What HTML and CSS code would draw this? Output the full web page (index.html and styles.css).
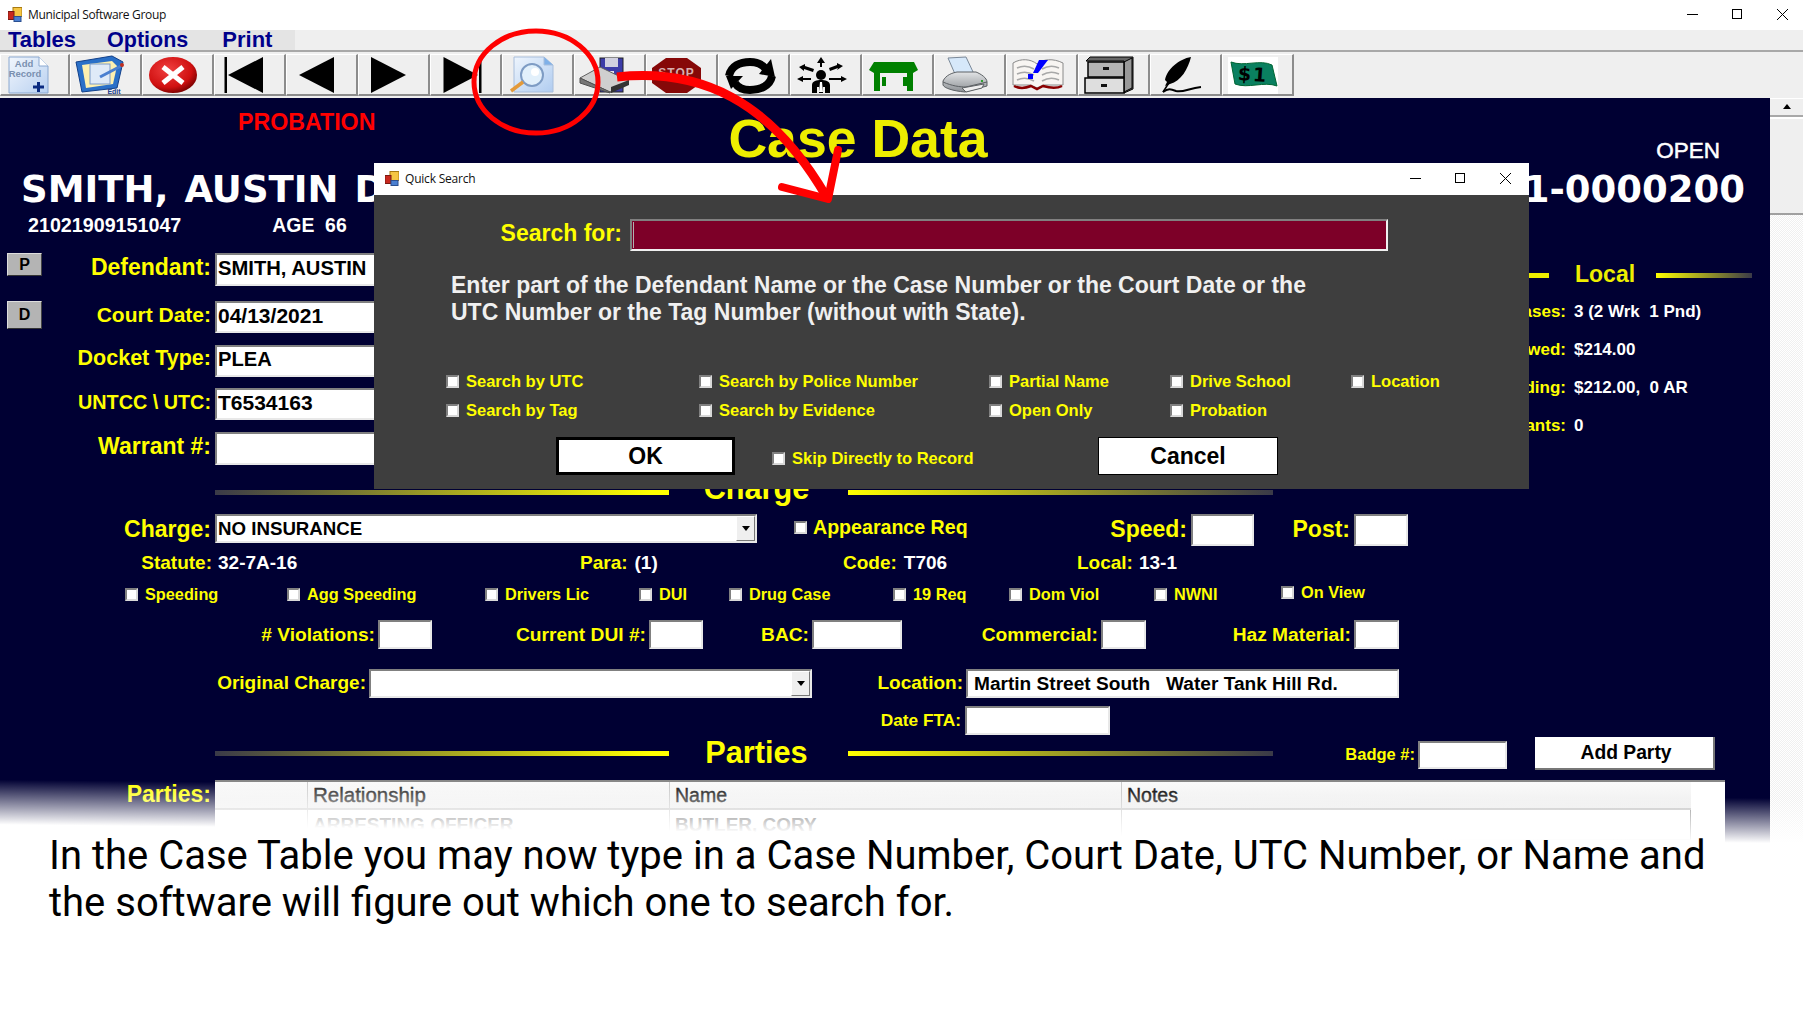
FILE: index.html
```html
<!DOCTYPE html>
<html lang="en">
<head>
<meta charset="utf-8">
<title>Municipal Software Group</title>
<link rel="stylesheet" href="styles.css">
</head>
<body>
<div class="page">
  <header class="titlebar">
    <svg class="appicon" viewBox="0 0 14 14"><rect x="5" y="0" width="9" height="9" fill="#f5c542" stroke="#a87a10"/><rect x="0" y="4" width="6" height="8" fill="#c8281e" stroke="#7a1a12"/><rect x="6" y="9" width="7" height="5" fill="#4a7fd0" stroke="#2a4f90"/></svg>
    <span class="titletext maintitle">Municipal Software Group</span>
    <span class="winctl">
      <i class="w-min"></i><i class="w-max"></i>
      <svg class="w-close" viewBox="0 0 11 11"><path d="M0 0L11 11M11 0L0 11" stroke="#000" fill="none"/></svg>
    </span>
  </header>
  <nav class="menubar"><div class="menus"><span class="m1">Tables</span><span class="m2">Options</span><span class="m3">Print</span></div></nav>
  <div class="toolbar">
    <button class="tb first"><svg viewBox="0 0 60 40"><defs><linearGradient id="pg" x1="0" y1="0" x2="1" y2="1"><stop offset="0" stop-color="#f2f7fd"/><stop offset="1" stop-color="#b8d0f0"/></linearGradient></defs><path d="M5 2H35L44 11V38H5Z" fill="url(#pg)" stroke="#8aa8d0"/><path d="M35 2V11H44" fill="#fff" stroke="#8aa8d0"/><text x="20" y="12" class="ic-t">Add</text><text x="21" y="22" class="ic-t">Record</text><path d="M29 32H40M34.500 27V37" stroke="#0a2a80" stroke-width="3"/></svg></button>
    <button class="tb"><svg viewBox="0 0 60 40"><path d="M0 7L36 1L47 7L41 33L6 37Z" fill="#2a70c8" stroke="#12408a"/><path d="M6 10L36 6L41 11L37 29L10 33Z" fill="#fdf0b0"/><rect x="14" y="9" width="20" height="20" fill="#dfeaf8" stroke="#7a9ac8"/><path d="M24 22L45 11" stroke="#4a7fd0" stroke-width="3"/><circle cx="46" cy="10" r="2" fill="#c03020"/><text x="38" y="39" class="ic-e">Edit</text></svg></button>
    <button class="tb"><svg viewBox="0 0 60 40"><defs><radialGradient id="rg" cx=".4" cy=".35" r=".7"><stop offset="0" stop-color="#f04040"/><stop offset=".7" stop-color="#d01010"/><stop offset="1" stop-color="#700000"/></radialGradient></defs><ellipse cx="25" cy="20" rx="24" ry="18" fill="url(#rg)"/><path d="M15 12L35 28M35 12L15 28" stroke="#fff" stroke-width="5"/></svg></button>
    <button class="tb"><svg viewBox="0 0 60 40"><rect x="4.500" y="2" width="2.500" height="36"/><path d="M8 20L43 2V38Z"/></svg></button>
    <button class="tb"><svg viewBox="0 0 60 40"><path d="M7 20L42 2V38Z"/></svg></button>
    <button class="tb"><svg viewBox="0 0 60 40"><path d="M7 2L42 20L7 38Z"/></svg></button>
    <button class="tb"><svg viewBox="0 0 60 40"><path d="M7.500 2L42 20L7.500 38Z"/><rect x="43" y="2" width="2.500" height="36"/></svg></button>
    <button class="tb"><svg viewBox="0 0 60 40"><defs><linearGradient id="sg" x1="0" y1="0" x2="1" y2="1"><stop offset="0" stop-color="#eef5fd"/><stop offset="1" stop-color="#b0ccf0"/></linearGradient></defs><path d="M6 2H36L45 10V37H6Z" fill="url(#sg)" stroke="#a8bedc"/><path d="M36 2V10H45" fill="#7fb0e8" stroke="#a8bedc"/><circle cx="24" cy="20" r="11" fill="#e2f0fb" stroke="#7e9cc4" stroke-width="2"/><circle cx="27" cy="17" r="4" fill="#fff"/><path d="M15 27L3 36" stroke="#e39a3a" stroke-width="3.500"/></svg></button>
    <button class="tb"><svg viewBox="0 0 60 40"><rect x="20" y="3" width="23" height="34" fill="#3c3ca8" stroke="#222"/><rect x="25" y="3" width="13" height="9" fill="#d0d0e0"/><rect x="27" y="16" width="7" height="10" fill="#e0e0f0"/><path d="M0 23L20 12L49 26L30 37Z" fill="#cfcfcf" stroke="#606060"/><path d="M0 23V28L30 38V37Z" fill="#777" stroke="#505050"/><path d="M31 32L49 25V30L31 38Z" fill="#333"/></svg></button>
    <button class="tb"><svg viewBox="0 0 60 40"><path d="M14 3H35L49 13V28L35 38H14L0 28V13Z" fill="#860808"/><text x="24.500" y="22" class="ic-stop">STOP</text></svg></button>
    <button class="tb"><svg viewBox="0 0 60 40"><path d="M5 21C7 11 16 7 26 7C33 7 38 9 42 14" fill="none" stroke="#000" stroke-width="8"/><path d="M35 19L47 4L51 22Z"/><path d="M48 21C46 31 36 35 26 35C20 35 14 33 11 28" fill="none" stroke="#000" stroke-width="8"/><path d="M2 21H19L7 34Z"/></svg></button>
    <button class="tb"><svg viewBox="0 0 60 40"><circle cx="25" cy="20" r="5"/><path d="M16 38V30C16 26 21 25 25 25C29 25 34 26 34 30V38H29V32H27V38H23V32H21V38Z"/><path d="M24 27H26L27 37H23Z" fill="#fff"/><path d="M25 2L21 8H24V12H26V8H29Z"/><path d="M3 12L9 9V11L18 14L17 17L8 14V16Z"/><path d="M47 11L41 8V10L33 13L34 16L42 13L41 15Z"/><path d="M1 24L7 21V23H15V25H7V27Z"/><path d="M51 24L45 21V23H33V25H45V27Z"/></svg></button>
    <button class="tb"><svg viewBox="0 0 60 40"><path d="M6 7H46L50 15L45 18V36H39V18H12V36H6V18L1 15Z" fill="#008000"/><rect x="14" y="22" width="4" height="9" fill="#008000"/><rect x="35" y="22" width="4" height="9" fill="#008000"/></svg></button>
    <button class="tb"><svg viewBox="0 0 60 40"><defs><linearGradient id="prg" x1="0" y1="0" x2="0" y2="1"><stop offset="0" stop-color="#e2e4e6"/><stop offset="1" stop-color="#8c9094"/></linearGradient></defs><path d="M8 3L26 2L34 19H15Z" fill="#d6e8fa" stroke="#7a8898"/><path d="M3 26C6 20 12 18 17 17H36C41 19 47 23 47 27V31L25 37C13 36 4 33 3 30Z" fill="url(#prg)" stroke="#5c6064"/><path d="M3 27C12 31 20 32 26 32L47 27" fill="none" stroke="#5c6064"/><path d="M22 33L44 29L42 33L26 37Z" fill="#eee" stroke="#5c6064"/><rect x="41" y="25" width="2" height="2" fill="#30a030"/></svg></button>
    <button class="tb"><svg viewBox="0 0 60 40"><path d="M1 8C9 3 19 4 25 9C31 4 41 3 51 8V30H31L25 33L19 30H1Z" fill="#f8f5f2" stroke="#8a8a8a"/><path d="M5 13C11 10 17 11 22 14M5 19C11 16 17 17 22 20M5 25C11 22 17 23 22 26M30 14C35 11 41 10 47 13M30 20C35 17 41 16 47 19M30 26C35 23 41 22 47 25" fill="none" stroke="#a8a8a8" stroke-width="1.500"/><path d="M2 31C8 34 14 33 19 31L25 34L31 31C38 33 44 34 50 31" fill="none" stroke="#8b0000" stroke-width="2.500"/><path d="M27 5H36L26 18H21Z" fill="#0000ff"/><rect x="16" y="19" width="5" height="5" fill="#0000ff"/></svg></button>
    <button class="tb"><svg viewBox="0 0 60 40"><path d="M2 6L6 2H49V34L40 38V6Z" fill="#666" stroke="#000"/><path d="M40 7L48 3V33L40 37Z" fill="#999" stroke="#000"/><rect x="4" y="7" width="36" height="15" fill="#b4b4b4" stroke="#000" stroke-width="1.500"/><rect x="19" y="12" width="6" height="3" fill="#111"/><rect x="1" y="23" width="39" height="15" fill="#dedede" stroke="#000" stroke-width="1.500"/><rect x="17" y="29" width="6" height="3" fill="#111"/></svg></button>
    <button class="tb"><svg viewBox="0 0 60 40"><path d="M35 2C23 4 11 14 9 25L11 27L9 31L14 29C25 26 32 14 35 2Z"/><path d="M7 37C12 33 15 34 20 36C27 38 33 33 45 32" fill="none" stroke="#000" stroke-width="2"/><path d="M7 37L18 20" stroke="#000" stroke-width="1.500"/></svg></button>
    <button class="tb"><svg viewBox="0 0 60 40"><rect x="0" y="2" width="50" height="37" fill="#fff"/><path d="M3 7C16 12 32 4 44 10L49 31C36 26 20 34 7 29Z" fill="#0a8060" stroke="#063"/><text x="25" y="26" class="ic-d" transform="rotate(4 25 20)">$1</text></svg></button>
  </div>

  <main class="main">
    <section class="form">
      <div class="head1"><span class="probation">PROBATION</span><span class="casedata">Case Data</span><span class="open">OPEN</span></div>
      <div class="head2"><span class="name">SMITH, AUSTIN D</span><span class="caseno">CR2021-0000200</span></div>
      <div class="head3"><span class="uid">21021909151047</span><span class="age">AGE&nbsp; 66</span></div>

      <div class="top">
        <div class="topleft">
          <div class="trow"><button class="pd">P</button><label class="l23">Defendant:</label><div class="fld big tall nar">SMITH, AUSTIN</div></div>
          <div class="trow"><button class="pd pd2">D</button><label class="l21">Court Date:</label><div class="fld big">04/13/2021</div></div>
          <div class="trow up1"><span class="nopd"></span><label class="l215">Docket Type:</label><div class="fld big nar">PLEA</div></div>
          <div class="trow"><span class="nopd"></span><label class="l198">UNTCC \ UTC:</label><div class="fld big">T6534163</div></div>
          <div class="trow"><span class="nopd"></span><label class="l23">Warrant #:</label><div class="fld big tall"></div></div>
        </div>
        <div class="local">
          <div class="localhead"><i class="rule solid"></i><span>Local</span><i class="rule fade-r"></i></div>
          <div class="stat"><span class="k">Cases:</span><span class="v">3 (2 Wrk&nbsp; 1 Pnd)</span></div>
          <div class="stat"><span class="k">Owed:</span><span class="v">$214.00</span></div>
          <div class="stat"><span class="k">Pending:</span><span class="v">$212.00,&nbsp; 0 AR</span></div>
          <div class="stat"><span class="k">Warrants:</span><span class="v">0</span></div>
        </div>
      </div>

      <div class="sect sect-charge"><i class="rule fade-l"></i><span class="secttitle">Charge</span><i class="rule fade-r"></i></div>

      <div class="row r-charge">
        <label class="l23">Charge:</label>
        <div class="fld sel"><span>NO INSURANCE</span><b class="drop"></b></div>
        <div class="chk c20 appear"><i class="cb"></i>Appearance Req</div>
        <label class="l23">Speed:</label><div class="fld h32"></div>
        <label class="l23">Post:</label><div class="fld h32"></div>
      </div>
      <div class="row r-stat">
        <span class="st-k">Statute:</span><span class="st-v">32-7A-16</span>
        <span class="st-p">Para:<em>(1)</em></span>
        <span class="st-p">Code:<em>T706</em></span>
        <span class="st-p">Local:<em class="tight">13-1</em></span>
      </div>
      <div class="row r-checks">
        <div class="chk"><i class="cb"></i>Speeding</div>
        <div class="chk"><i class="cb"></i>Agg Speeding</div>
        <div class="chk"><i class="cb"></i>Drivers Lic</div>
        <div class="chk"><i class="cb"></i>DUI</div>
        <div class="chk"><i class="cb"></i>Drug Case</div>
        <div class="chk"><i class="cb"></i>19 Req</div>
        <div class="chk"><i class="cb"></i>Dom Viol</div>
        <div class="chk"><i class="cb"></i>NWNI</div>
        <div class="chk up"><i class="cb"></i>On View</div>
      </div>
      <div class="row r-viol">
        <label>#&nbsp;Violations:</label><div class="fld"></div>
        <label>Current DUI #:</label><div class="fld"></div>
        <label>BAC:</label><div class="fld"></div>
        <label>Commercial:</label><div class="fld"></div>
        <label>Haz Material:</label><div class="fld"></div>
      </div>
      <div class="row r-orig">
        <label>Original Charge:</label>
        <div class="fld sel"><span></span><b class="drop"></b></div>
        <label>Location:</label>
        <div class="fld loc">Martin Street South&nbsp;&nbsp; Water Tank Hill Rd.</div>
      </div>
      <div class="row r-fta"><label>Date FTA:</label><div class="fld"></div></div>
      <div class="sect sect-parties">
        <i class="rule fade-l"></i><span class="secttitle">Parties</span><i class="rule fade-r"></i>
        <label>Badge #:</label><div class="fld badge"></div>
        <button class="addparty">Add Party</button>
      </div>
      <div class="partiesrow">
        <label class="l23 plabel">Parties:</label>
        <div class="grid">
          <div class="gh"><span class="c0"></span><span class="c1">Relationship</span><span class="c2">Name</span><span class="c3">Notes</span></div>
          <div class="gr"><span class="c0"></span><span class="c1">ARRESTING OFFICER</span><span class="c2">BUTLER, CORY</span><span class="c3"></span></div>
        </div>
      </div>
    </section>
    <aside class="scroll">
      <div class="sb-up"><i></i></div>
      <div class="sb-thumb"></div>
      <div class="sb-track"></div>
    </aside>
    <div class="fade"></div>
  </main>

  <p class="caption">In the Case Table you may now type in a Case Number, Court Date, UTC Number, or Name and<br>the software will figure out which one to search for.</p>

  <section class="dialog">
    <div class="dtitle">
      <svg class="appicon" viewBox="0 0 14 14"><rect x="5" y="0" width="9" height="9" fill="#f5c542" stroke="#a87a10"/><rect x="0" y="4" width="6" height="8" fill="#c8281e" stroke="#7a1a12"/><rect x="6" y="9" width="7" height="5" fill="#4a7fd0" stroke="#2a4f90"/></svg>
      <span class="titletext">Quick Search</span>
      <span class="winctl dctl">
        <i class="w-min"></i><i class="w-max"></i>
        <svg class="w-close" viewBox="0 0 11 11"><path d="M0 0L11 11M11 0L0 11" stroke="#000" fill="none"/></svg>
      </span>
    </div>
    <div class="dbody">
      <div class="dsearch"><label>Search for:</label><div class="dinput"><i class="caret"></i></div></div>
      <p class="dhelp">Enter part of the Defendant Name or the Case Number or the Court Date or the<br>UTC Number or the Tag Number (without with State).</p>
      <div class="dchecks">
        <div class="chk"><i class="cb"></i>Search by UTC</div>
        <div class="chk"><i class="cb"></i>Search by Police Number</div>
        <div class="chk"><i class="cb"></i>Partial Name</div>
        <div class="chk"><i class="cb"></i>Drive School</div>
        <div class="chk"><i class="cb"></i>Location</div>
        <div class="chk"><i class="cb"></i>Search by Tag</div>
        <div class="chk"><i class="cb"></i>Search by Evidence</div>
        <div class="chk"><i class="cb"></i>Open Only</div>
        <div class="chk"><i class="cb"></i>Probation</div>
      </div>
      <div class="dbtns">
        <button class="dbtn ok">OK</button>
        <div class="chk"><i class="cb"></i>Skip Directly to Record</div>
        <button class="dbtn cancel">Cancel</button>
      </div>
    </div>
  </section>

  <svg class="annot" viewBox="0 0 1803 1016">
    <ellipse cx="536" cy="82" rx="62" ry="51" fill="none" stroke="#f00" stroke-width="5"/>
    <path d="M617 77C700 68 770 100 826 196" fill="none" stroke="#f00" stroke-width="9"/>
    <path d="M782 187L828 199L838 150" fill="none" stroke="#f00" stroke-width="8" stroke-linecap="round" stroke-linejoin="round"/>
  </svg>
</div>
</body>
</html>
```
FILE: styles.css
```css
* { box-sizing: border-box; }
html, body { margin: 0; padding: 0; background: #fff; }
body { font-family: "Liberation Sans", Arial, sans-serif; }
.page { position: relative; width: 1803px; height: 1016px; overflow: hidden; background: #fff; }

/* window chrome */
.titlebar { height: 30px; display: flex; align-items: center; padding: 0 0 2px 8px; background: #fff; }
.appicon { width: 14px; height: 15px; margin-right: 6px; flex: none; }
.titletext { font-family: "Open Sans", sans-serif; font-size: 12px; letter-spacing: -.2px; color: #111; }
.maintitle { letter-spacing: -.33px; }
.winctl { margin-left: auto; display: flex; align-items: center; width: 116px; height: 28px; }
.w-min { display: block; width: 11px; height: 1px; background: #000; }
.w-max { display: block; width: 10px; height: 10px; border: 1px solid #000; margin-left: 34px; }
.w-close { width: 11px; height: 11px; margin-left: 35px; }

.menubar { height: 22px; background: #efefef; border-bottom: 2px solid #a8a8a8; }
.menus { width: 295px; height: 20px; background: #e4e4e4; display: flex; font-weight: 700; font-size: 22px; line-height: 20px; color: #00008b; }
.m1 { margin-left: 8px; }
.m2 { margin-left: 31px; font-size: 21.500px; }
.m3 { margin-left: 34px; }

.toolbar { height: 46px; background: #efefef; display: flex; padding: 2px 0; }
.tb { width: 72px; height: 42px; padding: 0 0 0 5px; background: #efefef; border: 0; border-left: 1px solid #fff; border-top: 1px solid #fff; border-right: 2px solid #8c8c8c; border-bottom: 2px solid #8c8c8c; display: block; }
.tb.first { width: 70px; padding-left: 3px; }
.tb svg { display: block; width: 60px; height: 40px; overflow: visible; }
.ic-t { font: 700 9.500px "Liberation Sans", sans-serif; fill: #7a90b0; text-anchor: middle; }
.ic-e { font: 700 7px "Liberation Sans", sans-serif; fill: #24408a; text-anchor: middle; }
.ic-stop { font: 700 12px "Liberation Sans", sans-serif; fill: #d8b0b0; text-anchor: middle; letter-spacing: 1px; }
.ic-d { font: 700 19px "DejaVu Sans", sans-serif; fill: #000; text-anchor: middle; letter-spacing: 2px; }

/* main form */
.main { position: relative; display: flex; height: 747px; }
.form { width: 1770px; background: #000033; color: #ff0; font-weight: 700; overflow: hidden; }
label { display: block; text-align: right; padding-right: 4px; color: #ff0; font-weight: 700; white-space: nowrap; }

.head1 { height: 70px; display: flex; }
.probation { margin: 11px 0 0 238px; font-size: 23.200px; line-height: 26px; color: #f00; }
.casedata { margin: 9px 0 0 353px; font-size: 53.600px; line-height: 62px; color: #eeee00; }
.open { margin: 40px 0 0 auto; padding-right: 50px; font-size: 22.500px; line-height: 26px; font-weight: 400; color: #fff; -webkit-text-stroke: .5px #fff; }
.head2 { height: 41px; display: flex; justify-content: space-between; padding: 1px 25px 0 21px; font-family: "DejaVu Sans", sans-serif; font-size: 37px; line-height: 41px; color: #fff; }
.name { word-spacing: 3px; }
.head3 { height: 34px; display: flex; padding-left: 28px; color: #fff; font-size: 19.700px; line-height: 32px; }
.age { margin-left: 91px; font-size: 19.400px; }

.top { display: flex; height: 222px; margin-top: 10px; }
.topleft { width: 1470px; display: grid; grid-template-rows: 48px 44px 43px 44px 33px; }
.trow { display: grid; grid-template-columns: 7px 35px 173px 420px; align-items: start; }
.trow label { grid-column: 3; grid-row: 1; line-height: 28px; }
.trow .fld { grid-column: 4; grid-row: 1; }
.trow .pd { grid-column: 2; grid-row: 1; }
.trow .nopd { display: none; }
.up1 label { line-height: 26px; }
.up1 .fld.big { line-height: 25px; }
.l23 { font-size: 23px; }
.l21 { font-size: 21px; }
.l215 { font-size: 21.500px; }
.l198 { font-size: 19.800px; }
.pd { height: 23px; width: 35px; padding: 0; background: #b4b4b4; border: 1px solid; border-color: #ddd #444 #333 #ddd; font: 700 16px "Liberation Sans", sans-serif; color: #000; }
.pd2 { height: 28px; }

.fld { height: 29px; background: #fff; border: 2px solid; border-color: #808080 #e8e8e8 #e8e8e8 #808080; color: #000; font-weight: 700; font-size: 19px; white-space: nowrap; overflow: hidden; }
.fld.big { height: 32px; padding-left: 1px; font-size: 21px; line-height: 26px; }
.fld.tall { height: 33px; }
.fld.nar { font-size: 20.200px; }
.h32 { height: 32px; }

.local { width: 300px; padding-top: 2px; font-size: 17px; }
.localhead { height: 38px; display: flex; align-items: center; font-size: 23px; color: #eeee00; }
.localhead span { margin: 0 21px 0 26px; width: 60px; }
.localhead .solid { width: 79px; margin-top: 2px; }
.localhead .fade-r { width: 96px; margin-top: 2px; }
.stat { height: 38px; display: flex; line-height: 38px; }
.stat .k { width: 96px; text-align: right; color: #ff0; }
.stat .v { margin-left: 8px; color: #fff; white-space: nowrap; }

.rule { display: block; height: 5px; }
.solid { background: #eeee00; }
.fade-l { background: linear-gradient(90deg, #3a3a48, #ffff00 96%); }
.fade-r { background: linear-gradient(90deg, #ffff00, #3a3a48); }

.sect { display: flex; align-items: center; padding-left: 215px; }
.sect .fade-l { width: 454px; }
.sect .fade-r { width: 425px; }
.secttitle { width: 175px; margin-right: 4px; text-align: center; font-size: 30.700px; color: #ff0; }
.sect-charge { height: 35px; }
.sect-charge .secttitle { margin-top: -7px; }
.sect-parties { height: 33px; margin-top: 3px; padding-bottom: 2px; }
.sect-parties .secttitle { margin-top: -2px; }
.sect-parties label { width: 145px; padding-right: 3px; padding-top: 2px; font-size: 16.500px; }
.badge { width: 89px; height: 28px; margin-top: 2px; }

.row { display: grid; align-items: start; }
.r-charge { height: 32px; margin-top: 4px; grid-template-columns: 215px 542px 243px 191px 63px 100px 54px; }
.r-charge label { line-height: 30px; }
.r-charge .fld { font-size: 18.700px; }
.sel { display: flex; align-items: center; justify-content: space-between; padding-left: 1px; }
.drop { position: relative; width: 19px; height: 25px; background: #efefef; border: 1px solid; border-color: #fff #777 #777 #fff; flex: none; }
.drop::after { content: ""; position: absolute; left: 5px; top: 9px; border: 4px solid transparent; border-top: 5px solid #000; border-bottom: 0; }

.chk { display: flex; align-items: center; color: #ff0; font-weight: 700; font-size: 16.300px; white-space: nowrap; }
.cb { display: block; flex: none; width: 13px; height: 13px; margin-right: 7px; background: #fff; border: 2px solid; border-color: #808080 #d8d8d8 #d8d8d8 #808080; }
.c20 { font-size: 19.600px; height: 26px; }
.appear { padding-left: 37px; }
.appear .cb { margin-right: 6px; }

.r-stat { height: 34px; line-height: 34px; font-size: 19px; grid-template-columns: 215px 365px 263px 234px auto; }
.st-k { text-align: right; padding-right: 3px; }
.st-v { color: #fff; padding-left: 3px; }
.st-p em { font-style: normal; color: #fff; margin-left: 7px; }
.st-p em.tight { margin-left: 6px; }

.r-checks { height: 32px; padding-left: 125px; padding-bottom: 4px; align-items: center; grid-template-columns: 162px 198px 154px 90px 164px 116px 145px 127px auto; }
.up { margin-top: -3px; }

.r-viol { height: 29px; margin-top: 8px; grid-template-columns: 378px 54px 217px 54px 109px 90px 199px 45px 208px 45px; }
.r-viol label { font-size: 19.200px; line-height: 29px; padding-right: 3px; }
.r-orig { height: 29px; margin-top: 20px; grid-template-columns: 369px 443px 154px 433px; }
.r-orig label { font-size: 19px; line-height: 28px; padding-right: 3px; }
.loc { padding-left: 6px; line-height: 25px; font-size: 19.100px; }
.r-fta { height: 29px; margin-top: 8px; grid-template-columns: 965px 145px; }
.r-fta label { font-size: 17.300px; line-height: 29px; }

.addparty { width: 180px; height: 33px; margin-left: 28px; padding: 1px 0 0 4px; background: #fff; border: 0; border-right: 2px solid #777; border-bottom: 2px solid #777; font: 700 19.300px "Liberation Sans", sans-serif; color: #000; }

.partiesrow { display: flex; margin-top: 9px; }
.plabel { width: 215px; line-height: 28px; }
.grid { width: 1510px; height: 75px; background: #fff; border-top: 2px solid #888; font-size: 19px; font-weight: 700; }
.gh, .gr { display: grid; width: 1476px; grid-template-columns: 92px 362px 452px 570px; }
.gh { height: 28px; background: linear-gradient(#fafafa, #eeeeee); border-bottom: 2px solid #c8c8c8; color: #222; line-height: 26px; font-size: 20.500px; font-weight: 400; -webkit-text-stroke: .4px #222; }
.gh span, .gr span { padding-left: 5px; border-left: 1px solid #ccc; white-space: nowrap; }
.gh .c2, .gh .c3 { font-size: 19.500px; }
.gh .c0, .gr .c0 { border-left: 0; }
.gr { height: 30px; color: #333; line-height: 30px; border-bottom: 1px solid #ccc; border-right: 1px solid #999; }

.scroll { width: 33px; display: flex; flex-direction: column; }
.sb-up { position: relative; height: 18px; background: #efefef; border-bottom: 2px solid #a8a8a8; margin-top: 1px; }
.sb-up i { position: absolute; left: 13px; top: 5px; border: 4px solid transparent; border-bottom: 5px solid #000; border-top: 0; }
.sb-thumb { height: 97px; margin-top: 1px; background: #efefef; border-bottom: 2px solid #a0a0a0; border-top: 1px solid #fff; }
.sb-track { flex: 1; background: repeating-conic-gradient(#fff 0 25%, #f0f0f0 0 50%) 0 0 / 2px 2px; }

.fade { position: absolute; left: 0; top: 677px; width: 1803px; height: 75px; background: linear-gradient(180.6deg, rgba(255,255,255,0) 25%, #fff 73%); }

.caption { position: relative; margin: -13px 0 0; padding-left: 49px; font-family: Roboto, sans-serif; font-size: 40px; line-height: 47px; color: #000; white-space: nowrap; }

/* dialog */
.dialog { position: absolute; left: 374px; top: 163px; width: 1155px; height: 326px; background: #3e3e3e; display: flex; flex-direction: column; }
.dtitle { height: 32px; background: #fff; display: flex; align-items: center; padding: 0 0 1px 11px; flex: none; }
.dctl { width: 119px; height: 31px; padding-bottom: 1px; }
.dbody { padding-top: 24px; }
.dsearch { display: flex; height: 32px; }
.dsearch label { width: 256px; padding-right: 8px; font-size: 23px; line-height: 29px; }
.dinput { width: 758px; height: 32px; background: #7d0028; border: 2px solid; border-color: #808080 #f0f0f0 #f0f0f0 #808080; padding: 1px 0 1px 1px; }
.caret { display: block; width: 1px; height: 100%; background: #b0b0b0; }
.dhelp { margin: 21px 0 0 77px; font-size: 23px; font-weight: 700; line-height: 27px; color: #f0f0f0; white-space: nowrap; }
.dchecks { margin: 41px 0 0 72px; display: grid; grid-template-columns: 253px 290px 181px 181px auto; grid-auto-rows: 29px; }
.dchecks .chk, .dbtns .chk { font-size: 16.500px; }
.dbtns { display: flex; align-items: center; margin: 12px 0 0 182px; height: 38px; }
.dbtn { height: 38px; width: 179px; padding: 0; background: #fff; font: 700 23px "Liberation Sans", sans-serif; color: #000; }
.ok { border: 3px solid #000; }
.cancel { border: 1px solid #000; margin-left: auto; margin-right: 251px; width: 180px; }
.dbtns .chk { margin-left: 37px; margin-top: 5px; }

/* annotation */
.annot { position: absolute; left: 0; top: 0; width: 1803px; height: 1016px; pointer-events: none; }
```
